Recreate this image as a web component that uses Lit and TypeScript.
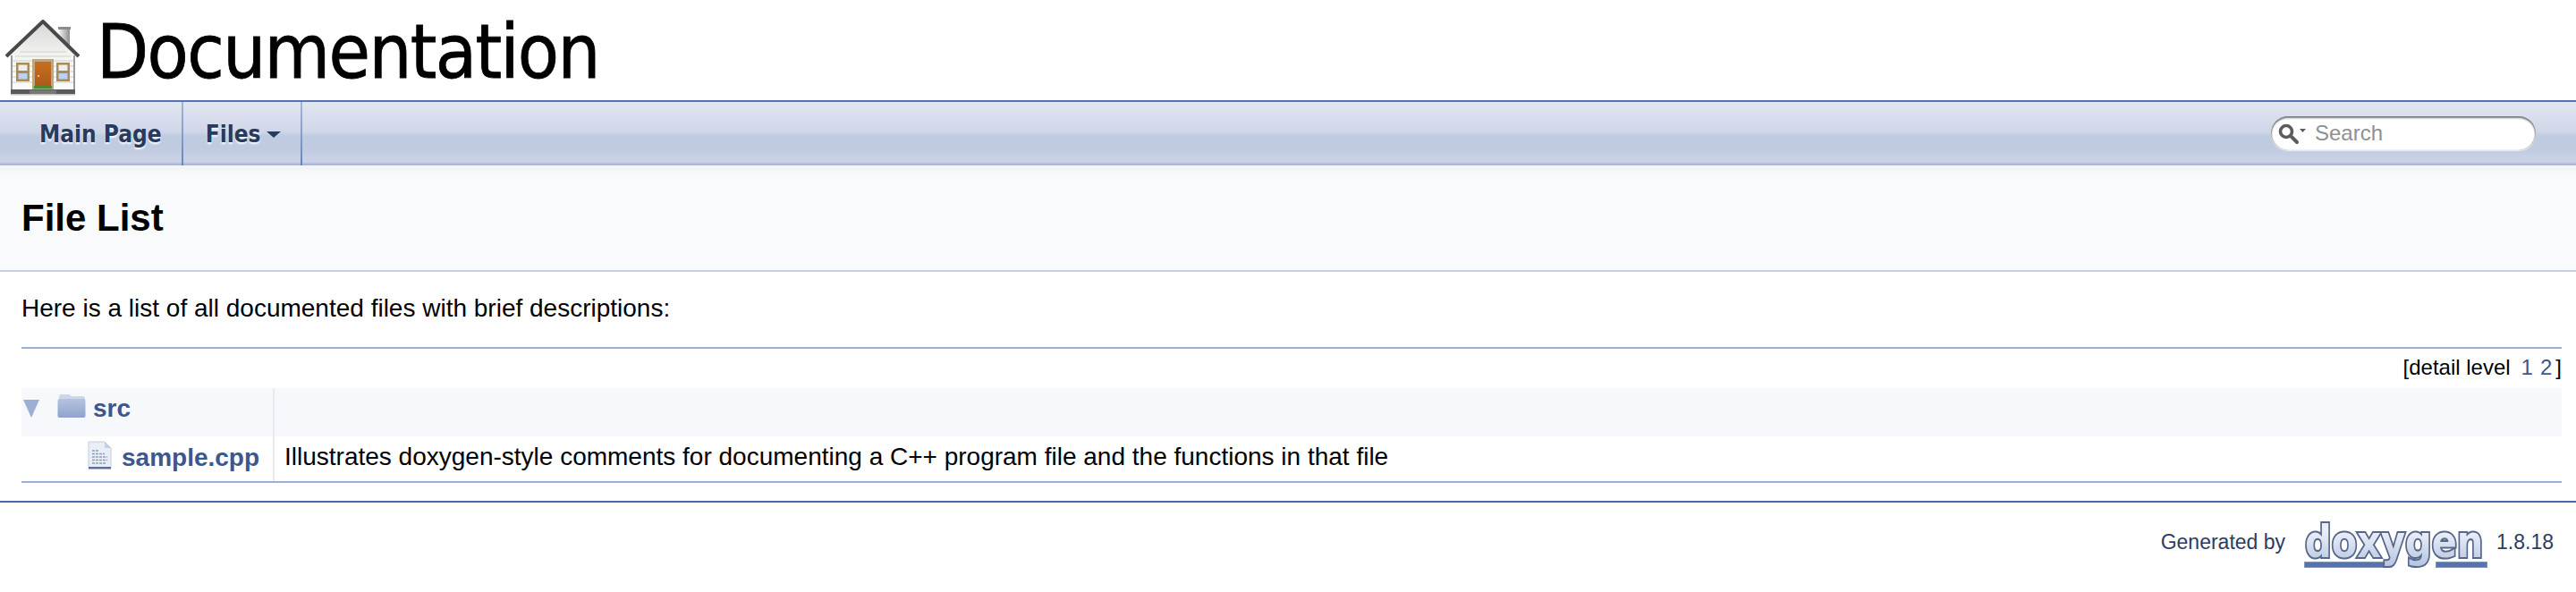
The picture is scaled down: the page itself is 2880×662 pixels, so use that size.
import { LitElement, html, css, svg } from "lit";
import { customElement } from "lit/decorators.js";

const houseIcon = svg`
  <svg class="house" viewBox="0 0 100 112" width="100" height="112">
    <defs>
      <linearGradient id="wall" x1="0" y1="0" x2="0" y2="1">
        <stop offset="0" stop-color="#d8d9d6" />
        <stop offset="0.5" stop-color="#f4f4f1" />
        <stop offset="1" stop-color="#fbfbf9" />
      </linearGradient>
      <linearGradient id="chimney" x1="0" y1="0" x2="1" y2="0">
        <stop offset="0" stop-color="#f1f1f0" />
        <stop offset="1" stop-color="#8e8e8c" />
      </linearGradient>
      <linearGradient id="door" x1="0" y1="0" x2="0" y2="1">
        <stop offset="0" stop-color="#c96f1f" />
        <stop offset="1" stop-color="#a9571c" />
      </linearGradient>
    </defs>
    <rect x="66" y="31" width="12" height="26" fill="url(#chimney)" />
    <rect x="65" y="30" width="14" height="3" fill="#8c8c8c" />
    <path d="M48 26 L84 62 V100 H12 V62 Z" fill="url(#wall)" />
    <path d="M22 58H74M17 63H79M13 68H83M13 74H83M13 80H83M13 86H83M13 92H83" stroke="#d0d0cd" stroke-width="1" />
    <path d="M7 63 L48 24 L88 63" fill="none" stroke="#48494a" stroke-width="4" stroke-linejoin="round" />
    <rect x="12" y="62" width="2" height="38" fill="#9a9a98" />
    <rect x="82" y="62" width="2" height="38" fill="#9a9a98" />
    <rect x="36" y="66" width="24" height="34" fill="#bda680" />
    <rect x="39" y="69" width="18" height="29" fill="url(#door)" />
    <circle cx="43" cy="85" r="1.2" fill="#e8c35a" />
    <rect x="38" y="96" width="20" height="3" fill="#4c8a32" />
    <rect x="18" y="70" width="15" height="21" fill="#a98c5e" />
    <rect x="20.5" y="72.5" width="10" height="6.5" fill="#eeeeea" />
    <rect x="20.5" y="82" width="10" height="6.5" fill="#bcd2f0" />
    <rect x="63" y="70" width="15" height="21" fill="#a98c5e" />
    <rect x="65.5" y="72.5" width="10" height="6.5" fill="#eeeeea" />
    <rect x="65.5" y="82" width="10" height="6.5" fill="#bcd2f0" />
    <rect x="12" y="100" width="72" height="5" fill="#5a5a5a" />
    <rect x="33" y="101" width="30" height="5" fill="#777" />
    <rect x="12" y="105" width="72" height="1.5" fill="#c4c4c4" />
  </svg>
`;

const folderIcon = svg`
  <svg class="folder" viewBox="0 0 32 28" width="32" height="28">
    <defs>
      <linearGradient id="fold" x1="0" y1="0" x2="0" y2="1">
        <stop offset="0" stop-color="#b4c3e0" />
        <stop offset="1" stop-color="#8ea3cc" />
      </linearGradient>
    </defs>
    <path d="M2 4 Q2 1 4 1 H13 L16 3 H29 Q31 3 31 5 V8 H2 Z" fill="#cdd7ea" />
    <rect x="0.5" y="6" width="31" height="21" rx="2" fill="url(#fold)" />
  </svg>
`;

const docIcon = svg`
  <svg class="doc" viewBox="0 0 30 32" width="30" height="32">
    <path d="M3 1 H21 L28 8 V30 H3 Z" fill="#e9edf6" stroke="#c4cfe4" stroke-width="1" />
    <path d="M21 1 V8 H28 Z" fill="#c4d0e6" />
    <path d="M7 11H15M7 14.5H21M7 18H24M7 21.5H24M7 25H22" stroke="#8a9cc0" stroke-width="1.6" stroke-dasharray="3 1" />
    <rect x="3" y="29" width="25" height="2.5" fill="#5c6f98" />
  </svg>
`;

const searchIcon = svg`
  <svg class="glass" viewBox="0 0 34 28" width="34" height="28">
    <circle cx="11" cy="12" r="6.5" fill="none" stroke="#5c5c5c" stroke-width="3.6" />
    <path d="M16 17 L23 24" stroke="#5c5c5c" stroke-width="4" stroke-linecap="round" />
    <path d="M26 9 H33 L29.5 13 Z" fill="#5c5c5c" />
  </svg>
`;

// viewBox starts above 0 so the scaled text's font box stays inside the svg
const doxygenLogo = svg`
  <svg class="logo" viewBox="0 -8 206 62" width="206" height="62">
    <defs>
      <linearGradient id="logofill" x1="0" y1="0" x2="0" y2="1">
        <stop offset="0.35" stop-color="#e9edf6" />
        <stop offset="1" stop-color="#b3c2df" />
      </linearGradient>
    </defs>
    <rect x="1.5" y="45.5" width="89" height="6" fill="#5373b4" stroke="#8a93a8" stroke-width="1" />
    <rect x="148.5" y="45.5" width="57" height="6" fill="#5373b4" stroke="#8a93a8" stroke-width="1" />
    <g transform="translate(2 40) scale(1 1.22)">
      <text
        font-family="'DejaVu Sans', sans-serif"
        font-weight="700"
        font-size="41.5"
        fill="url(#logofill)"
        stroke="#56678d"
        stroke-width="3.4"
        paint-order="stroke"
      >doxygen</text>
    </g>
  </svg>
`;

@customElement("app-root")
export class AppRoot extends LitElement {
  static styles = css`
    :host {
      display: block;
      font-family: "Liberation Sans", Arial, sans-serif;
      font-size: 28px;
      color: #000;
      background: #fff;
    }

    .titlearea {
      display: flex;
      align-items: flex-start;
      height: 112px;
      gap: 8px;
      border-bottom: 2px solid #5373b4;
    }

    .house {
      display: block;
      flex-shrink: 0;
      filter: blur(0.7px);
    }

    .project {
      font-family: "DejaVu Sans Condensed", "DejaVu Sans", sans-serif;
      font-stretch: condensed;
      font-size: 84px;
      line-height: 116px;
      letter-spacing: -1.6px;
      -webkit-text-stroke: 0.8px #000;
    }

    .navbar {
      display: flex;
      align-items: stretch;
      height: 71px;
      background: linear-gradient(
        to bottom,
        #e3e6f1 0,
        #ced6e8 34px,
        #bfcbe1 38px,
        #c0cbe1 52px,
        #cbd3e6 67px,
        #a9b5d3 70px
      );
    }

    .tab {
      display: flex;
      align-items: center;
      gap: 8px;
      padding: 0 22px;
      font-family: "DejaVu Sans Condensed", "DejaVu Sans", sans-serif;
      font-weight: 700;
      font-size: 26px;
      color: #283a5d;
      text-shadow: 0 2px 2px rgba(255, 255, 255, 0.9);
      border-right: 2px solid;
      border-image: linear-gradient(to bottom, #a3b5d8, #6a84bb) 1;
    }

    .tab.first {
      padding-left: 44px;
    }

    .tab.files {
      padding-left: 25px;
      gap: 6px;
    }

    .caret {
      width: 0;
      height: 0;
      margin-top: 2px;
      border-left: 8px solid transparent;
      border-right: 8px solid transparent;
      border-top: 7px solid #283a5d;
    }

    .search {
      display: flex;
      align-items: center;
      gap: 9px;
      width: 296px;
      height: 38px;
      box-sizing: border-box;
      margin: 16px 45px 0 auto;
      padding-left: 6px;
      background: #fff;
      border-radius: 19px;
      box-shadow:
        inset 0 2px 2px #777,
        inset 1px 0 1px #bbb,
        inset -1px 0 1px #bbb,
        0 1px 1px #e8ebf3;
      font-size: 24px;
      color: #909090;
    }

    .glass {
      flex-shrink: 0;
    }

    .header {
      height: 116px;
      background: linear-gradient(to bottom, #f1f3f8 0, #f9fafc 10px);
      border-bottom: 2px solid #c4cfe5;
      display: flex;
      align-items: center;
      padding-left: 24px;
      margin-top: 1px;
    }

    .title {
      font-weight: 700;
      font-size: 42px;
    }

    .contents {
      margin: 0 16px 0 24px;
    }

    .intro {
      margin: 0;
      box-sizing: border-box;
      padding-top: 25px;
      height: 84px;
      line-height: 32px;
    }

    .directory {
      border-top: 2px solid #9cafd4;
      border-bottom: 2px solid #9cafd4;
    }

    .levels {
      display: flex;
      justify-content: flex-end;
      height: 44px;
      line-height: 42px;
      font-size: 24px;
    }

    .levels span {
      color: #3d578c;
      margin-left: 8px;
    }

    .levels span.one {
      margin-left: 12px;
    }

    .levels span.last {
      color: #000;
      margin-left: 4px;
    }

    .row {
      display: grid;
      grid-template-columns: 283px 1fr;
    }

    .row.even {
      height: 54px;
      background: #f7f8fb;
    }

    .row.odd {
      height: 50px;
    }

    .entry {
      display: flex;
      align-items: center;
      border-right: 2px solid #e9ebf1;
      font-weight: 700;
      color: #3d578c;
    }

    .row.even .entry {
      padding-bottom: 8px;
    }

    .row.odd .entry {
      padding-bottom: 3px;
    }

    .arrow {
      width: 0;
      height: 0;
      margin-left: 2px;
      border-left: 9px solid transparent;
      border-right: 9px solid transparent;
      border-top: 20px solid #9cafd4;
    }

    .folder {
      margin: -6px 8px 0 20px;
    }

    .doc {
      margin: -5px 10px 0 72px;
    }

    .desc {
      padding-left: 11px;
      line-height: 45px;
    }

    .footer {
      margin-top: 20px;
      border-top: 2px solid #4a6aaa;
      display: flex;
      align-items: center;
      justify-content: flex-end;
      height: 100px;
      padding: 0 25px 10px 0;
      box-sizing: border-box;
      font-size: 23px;
      color: #2a3d61;
    }

    .logo {
      margin: 0 10px 0 20px;
      filter: blur(0.6px);
    }
  `;

  render() {
    return html`
      <div class="titlearea">
        ${houseIcon}
        <div class="project">Documentation</div>
      </div>
      <nav class="navbar">
        <div class="tab first">Main Page</div>
        <div class="tab files">Files <span class="caret"></span></div>
        <div class="search">${searchIcon}<span>Search</span></div>
      </nav>
      <div class="header"><div class="title">File List</div></div>
      <div class="contents">
        <p class="intro">Here is a list of all documented files with brief descriptions:</p>
        <div class="directory">
          <div class="levels">[detail level <span class="one">1</span><span>2</span><span class="last">]</span></div>
          <div class="row even">
            <div class="entry"><span class="arrow"></span>${folderIcon}src</div>
            <div class="desc"></div>
          </div>
          <div class="row odd">
            <div class="entry">${docIcon}sample.cpp</div>
            <div class="desc">Illustrates doxygen-style comments for documenting a C++ program file and the functions in that file</div>
          </div>
        </div>
      </div>
      <footer class="footer">Generated by ${doxygenLogo} 1.8.18</footer>
    `;
  }
}
